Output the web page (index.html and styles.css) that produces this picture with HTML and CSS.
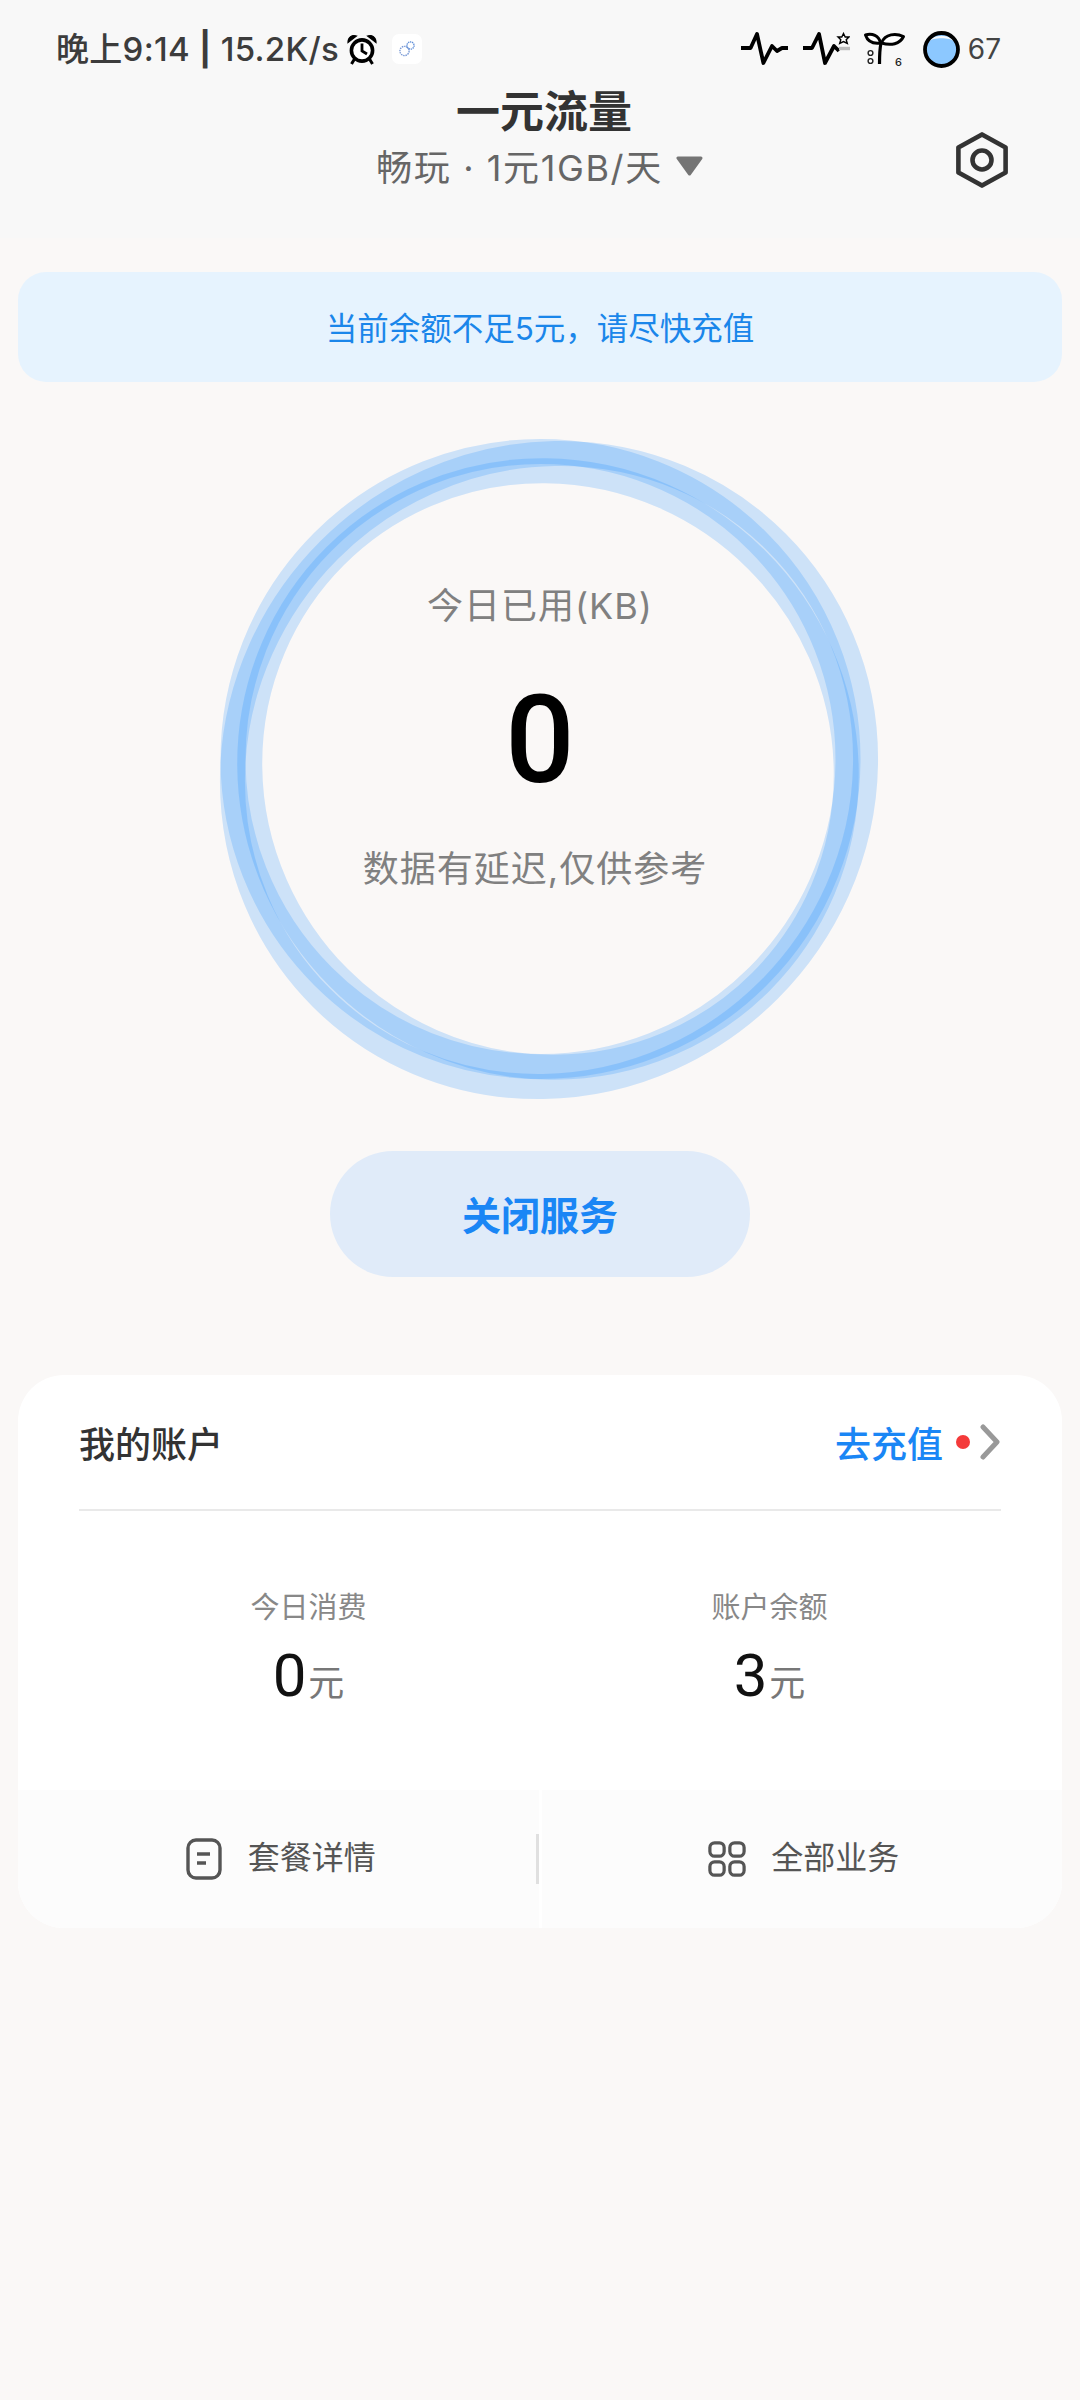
FILE: index.html
```html
<!DOCTYPE html>
<html lang="zh-CN">
<head>
<meta charset="utf-8">
<title>一元流量</title>
<link rel="stylesheet" href="styles.css">
</head>
<body>
<header class="top">
  <div class="status">
    <div class="status-left">
      <span class="clock">晚上9:14 <b class="sep">|</b> 15.2K/s</span>
      <svg class="alarm" viewBox="0 0 30 31" aria-hidden="true">
        <circle cx="15" cy="16.500" r="10.600" fill="#fff" stroke="#000" stroke-width="3.600"/>
        <path d="M15 9.500V17L20 20" fill="none" stroke="#000" stroke-width="2.800"/>
        <path d="M1 8.500C1 3 5 0.500 9.500 2Z M29 8.500C29 3 25 0.500 20.500 2Z" fill="#000" stroke="#000" stroke-width="1.200"/>
        <path d="M7.500 25L4.500 30M22.500 25L25.500 30" stroke="#000" stroke-width="3"/>
      </svg>
      <span class="notify">
        <svg viewBox="0 0 18 18" aria-hidden="true">
          <circle cx="6.500" cy="11" r="4.600" fill="none" stroke="#7b9bd6" stroke-width="1.400" stroke-dasharray="1.500 .8"/>
          <circle cx="12.500" cy="5.500" r="3.600" fill="none" stroke="#5f8ed8" stroke-width="1.400" stroke-dasharray="1.300 .7"/>
        </svg>
      </span>
    </div>
    <div class="status-right">
      <svg class="pulse" viewBox="0 0 47 34" aria-hidden="true">
        <path d="M0 16H9.600L16 2L22.400 31L31 14L36 19L41 16H47" fill="none" stroke="#000" stroke-width="3.800" stroke-linejoin="round"/>
      </svg>
      <svg class="pulse" viewBox="0 0 47 34" aria-hidden="true">
        <path d="M0 16H9L16 2L22 31L31 14L36 19" fill="none" stroke="#000" stroke-width="3.800" stroke-linejoin="round"/>
        <path d="M36 16.500H47" stroke="#bbb" stroke-width="3.400"/>
        <path d="M40.500 1.500L42.200 5H46L43.200 7.800L44.300 11.500L40.500 9.600L36.700 11.500L37.800 7.800L35 5H38.800Z" fill="#fff" stroke="#000" stroke-width="1.400"/>
      </svg>
      <svg class="plant" viewBox="0 0 41 35" aria-hidden="true">
        <path d="M15.500 32C15.500 24 15.500 18 17 11" fill="none" stroke="#000" stroke-width="3.200"/>
        <path d="M1.500 3C8 1 15 3.500 16.500 11C9 12 3.500 9 1.500 3Z" fill="#fff" stroke="#000" stroke-width="3" stroke-linejoin="round"/>
        <path d="M39.500 4.500C32 1 21 1.500 17.500 11C27 14 36 12 39.500 4.500Z" fill="#fff" stroke="#000" stroke-width="3" stroke-linejoin="round"/>
        <circle cx="6.500" cy="21" r="2.400" fill="#fff" stroke="#222" stroke-width="1.400"/>
        <circle cx="6.500" cy="29" r="2.400" fill="#fff" stroke="#222" stroke-width="1.400"/>
        <text x="31" y="34" class="plant-num">6</text>
      </svg>
      <svg class="battery" viewBox="0 0 37 37" aria-hidden="true">
        <circle cx="18.500" cy="18.500" r="16.500" fill="#8cc8ff"/>
        <path d="M5.500 10.500C10 6 27 6 31.500 10.500C28 3 9 3 5.500 10.500Z" fill="#f4f8fc"/>
        <circle cx="18.500" cy="18.500" r="16.500" fill="none" stroke="#000" stroke-width="3.800"/>
      </svg>
      <span class="level">67</span>
    </div>
  </div>
  <div class="titlebar">
    <div class="title-block">
      <h1 class="title">一元流量</h1>
      <div class="plan">
        <span class="plan-text">畅玩 · 1元1GB/天</span>
        <svg class="caret" viewBox="0 0 29 20" aria-hidden="true"><path d="M3 2H26L14.500 18Z" fill="#757575" stroke="#757575" stroke-width="3" stroke-linejoin="round"/></svg>
      </div>
    </div>
    <svg class="settings" viewBox="0 0 52 56" aria-hidden="true">
      <path d="M26 2.400L49.600 15.500V40.500L26 53.600L2.400 40.500V15.500Z" fill="none" stroke="#333" stroke-width="4.600" stroke-linejoin="round"/>
      <circle cx="26" cy="28" r="9.500" fill="none" stroke="#333" stroke-width="4.600"/>
    </svg>
  </div>
</header>

<main>
  <div class="notice">当前余额不足5元，请尽快充值</div>

  <section class="gauge">
    <svg class="rings" viewBox="0 382 1080 769" aria-hidden="true">
      <ellipse class="ring" cx="548" cy="769" rx="301" ry="295.500" transform="rotate(45 548 769)"/>
      <circle class="ring" cx="540.500" cy="759" r="307.500"/>
      <ellipse class="ring" cx="549" cy="770" rx="322" ry="311" transform="rotate(-45 549 770)"/>
    </svg>
    <div class="gauge-label">今日已用(KB)</div>
    <div class="gauge-value">0</div>
    <div class="gauge-hint">数据有延迟,仅供参考</div>
  </section>

  <button class="stop" type="button">关闭服务</button>

  <section class="card">
    <div class="card-head">
      <span class="card-title">我的账户</span>
      <span class="recharge">
        <span class="recharge-text">去充值</span>
        <i class="dot"></i>
        <svg class="chevron" viewBox="0 0 20 36" aria-hidden="true"><path d="M3 3L17 18L3 33" fill="none" stroke="#999" stroke-width="5" stroke-linecap="round" stroke-linejoin="round"/></svg>
      </span>
    </div>
    <div class="stats">
      <div class="stat">
        <div class="stat-label">今日消费</div>
        <div class="stat-value"><span class="num">0</span><span class="unit">元</span></div>
      </div>
      <div class="stat">
        <div class="stat-label">账户余额</div>
        <div class="stat-value"><span class="num">3</span><span class="unit">元</span></div>
      </div>
    </div>
    <div class="card-foot">
      <div class="foot-cell">
        <svg class="foot-icon" viewBox="0 0 36 42" aria-hidden="true">
          <rect x="2" y="2" width="32" height="38" rx="8" fill="none" stroke="#555" stroke-width="3.400"/>
          <path d="M11 16H24M11 25H20" stroke="#555" stroke-width="3.400"/>
        </svg>
        <span class="foot-text">套餐详情</span>
        <i class="foot-rule"></i>
      </div>
      <div class="foot-cell">
        <svg class="foot-icon" viewBox="0 0 40 38" aria-hidden="true">
          <rect x="2" y="2" width="15" height="14" rx="5" fill="none" stroke="#555" stroke-width="3.400"/>
          <rect x="23" y="2" width="15" height="14" rx="5" fill="none" stroke="#555" stroke-width="3.400"/>
          <rect x="2" y="22" width="15" height="14" rx="5" fill="none" stroke="#555" stroke-width="3.400"/>
          <rect x="23" y="22" width="15" height="14" rx="5" fill="none" stroke="#555" stroke-width="3.400"/>
        </svg>
        <span class="foot-text">全部业务</span>
      </div>
    </div>
  </section>
</main>
</body>
</html>
```
FILE: styles.css
```css
* { box-sizing: border-box; }
html, body { margin: 0; padding: 0; }
body {
  width: 1080px;
  height: 2400px;
  background: #faf8f7;
  font-family: Inter, "Noto Sans CJK SC", sans-serif;
  overflow: hidden;
}

/* top */
.top { height: 238px; background: #f8f8f8; padding-top: 29px; }
.status {
  height: 40px;
  padding: 0 79px 0 56px;
  display: flex;
  justify-content: space-between;
  align-items: center;
}
.status-left, .status-right { display: flex; align-items: center; }
.clock { font-size: 33px; font-weight: 500; letter-spacing: .3px; color: #3c3c3c; line-height: 40px; white-space: nowrap; }
.sep { font-weight: 700; }
.alarm { width: 30px; height: 31px; margin-left: 8px; }
.notify {
  width: 30px; height: 30px; margin-left: 15px;
  background: #fff; border-radius: 7px;
  display: flex; align-items: center; justify-content: center;
}
.notify svg { width: 18px; height: 18px; }
.pulse { width: 47px; height: 34px; margin-right: 15px; }
.plant { width: 41px; height: 35px; margin-left: -1px; margin-right: 18px; overflow: visible; }
.plant-num { font-size: 11px; font-weight: 500; fill: #222; }
.battery { width: 37px; height: 37px; margin-right: 8px; }
.level { font-size: 28px; color: #444; line-height: 40px; }

.titlebar {
  margin-top: 18px;
  display: grid;
  grid-template-columns: 1fr auto 1fr;
}
.title-block { grid-column: 2; display: flex; flex-direction: column; align-items: center; }
.title { margin: 0; padding-left: 8px; font-size: 44px; font-weight: 700; color: #333; line-height: 50px; }
.plan {
  margin-top: 8px;
  display: flex; align-items: center;
}
.plan-text { font-size: 36px; letter-spacing: 1.6px; color: #666; line-height: 46px; white-space: nowrap; }
.caret { width: 29px; height: 20px; margin-left: 12px; margin-bottom: 5px; }
.settings { grid-column: 3; justify-self: end; align-self: end; width: 52px; height: 56px; margin: 0 72px 3px 0; }

/* notice */
.notice {
  margin: 34px 18px 0;
  height: 110px;
  padding-bottom: 2px;
  border-radius: 28px;
  background: #e6f3fe;
  color: #1a86ea;
  font-size: 31.500px;
  display: flex; align-items: center; justify-content: center;
}

/* gauge */
.gauge {
  position: relative;
  height: 769px;
  padding-top: 199px;
  display: flex; flex-direction: column; align-items: center;
}
.rings { position: absolute; inset: 0; width: 1080px; height: 769px; }
.ring { fill: none; stroke: rgba(0, 125, 255, .18); stroke-width: 25; }
.gauge-label, .gauge-hint { position: relative; font-size: 36px; letter-spacing: 1px; color: #808080; line-height: 50px; }
.gauge-value { position: relative; margin-top: 50px; font-family: Roboto, sans-serif; font-size: 122px; font-weight: 500; color: #000; line-height: 120px; }
.gauge-hint { margin-top: 43px; margin-right: 10px; }

/* button */
.stop {
  display: block;
  margin: 0 auto;
  width: 420px; height: 126px;
  padding: 0 0 3px;
  border: 0; border-radius: 63px;
  background: #e0ebf9;
  color: #1a86f5;
  font: 700 39px Inter, "Noto Sans CJK SC", sans-serif;
}

/* card */
.card {
  margin: 98px 18px 0;
  height: 553px;
  background: #fff;
  border-radius: 46px;
  overflow: hidden;
  display: flex; flex-direction: column;
}
.card-head {
  margin: 0 61px;
  height: 136px;
  border-bottom: 2px solid #e9e9e9;
  display: flex; align-items: center; justify-content: space-between;
}
.card-title { font-size: 36px; font-weight: 500; color: #333; }
.recharge { display: flex; align-items: center; }
.recharge-text { font-size: 36px; font-weight: 500; color: #1a86f5; }
.dot { width: 14px; height: 14px; margin-left: 13px; border-radius: 50%; background: #f43a3a; }
.chevron { width: 20px; height: 36px; margin-left: 10px; margin-right: 1px; }

.stats {
  height: 279px;
  padding: 76px 62px 0 60px;
  display: grid;
  grid-template-columns: 1fr 1fr;
}
.stat { display: flex; flex-direction: column; align-items: center; }
.stat-label { font-size: 29px; color: #888; line-height: 42px; }
.stat-value { margin-top: 12px; display: flex; align-items: baseline; line-height: 70px; color: #111; }
.num { font-family: Roboto, sans-serif; font-size: 60px; }
.unit { font-size: 36px; color: #777; margin-left: 2px; }

.card-foot { height: 138px; display: flex; gap: 3px; }
.foot-cell {
  position: relative;
  flex: 1;
  padding-left: 4px;
  background: #fcfcfc;
  display: flex; align-items: center; justify-content: center; gap: 25px;
  font-size: 32px; color: #555;
}
.foot-text { padding-bottom: 8px; }
.foot-icon { width: 38px; height: 42px; }
.foot-rule { position: absolute; right: 0; top: 44px; width: 3px; height: 50px; background: #e0e0e0; }
```
